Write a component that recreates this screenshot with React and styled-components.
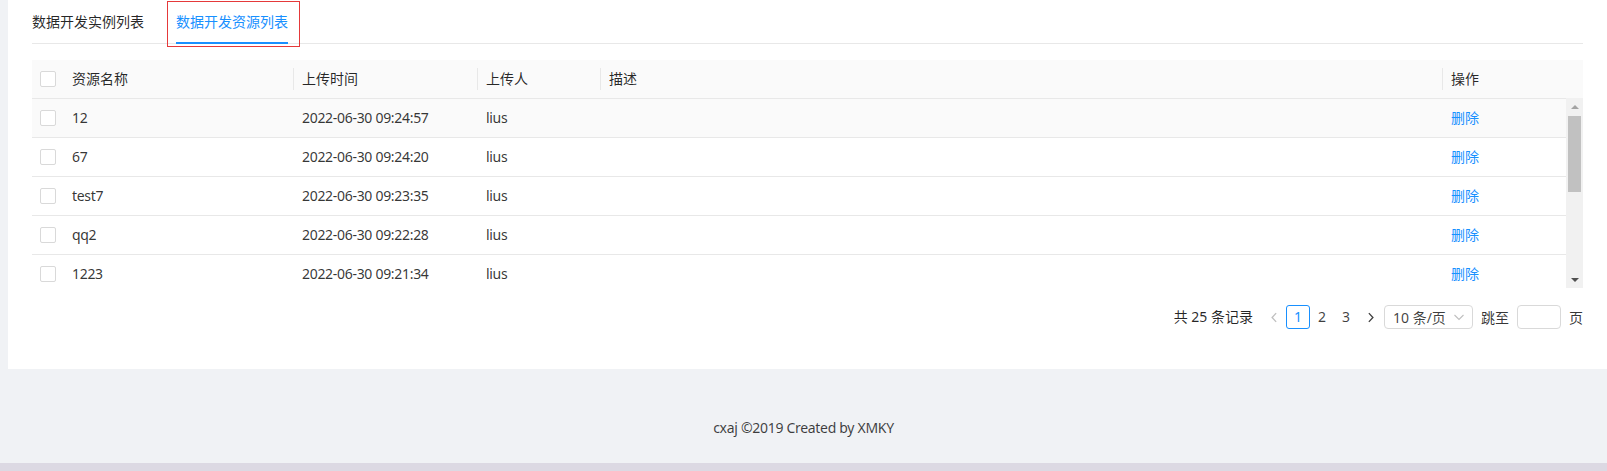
import React from "react";
import styled, { createGlobalStyle } from "styled-components";

const GlobalStyle = createGlobalStyle`
  html, body {
    margin: 0;
    padding: 0;
    background: #f0f2f5;
  }
  body {
    font-family: "Noto Sans", "Noto Sans CJK SC", sans-serif;
    font-size: 14px;
    color: rgba(0, 0, 0, 0.85);
  }
  * {
    box-sizing: border-box;
  }
`;

const rows = [
  { name: "12", time: "2022-06-30 09:24:57", user: "lius", hover: true },
  { name: "67", time: "2022-06-30 09:24:20", user: "lius" },
  { name: "test7", time: "2022-06-30 09:23:35", user: "lius" },
  { name: "qq2", time: "2022-06-30 09:22:28", user: "lius" },
  { name: "1223", time: "2022-06-30 09:21:34", user: "lius" },
];

function App() {
  return (
    <Page>
      <GlobalStyle />
      <Content>
        <Card>
          <TabBar>
            <Tab>数据开发实例列表</Tab>
            <Tab active marked>
              数据开发资源列表
            </Tab>
          </TabBar>

          <Table>
            <HeadRow>
              <SelCell>
                <Checkbox />
              </SelCell>
              <HeadCell first>资源名称</HeadCell>
              <HeadCell>上传时间</HeadCell>
              <HeadCell>上传人</HeadCell>
              <HeadCell>描述</HeadCell>
              <HeadCell>操作</HeadCell>
            </HeadRow>
            <BodyWrap>
              <Rows>
                {rows.map((r) => (
                  <Row key={r.name} hover={r.hover}>
                    <SelCell>
                      <Checkbox />
                    </SelCell>
                    <Cell first>{r.name}</Cell>
                    <Cell>{r.time}</Cell>
                    <Cell>{r.user}</Cell>
                    <Cell></Cell>
                    <Cell>
                      <Action>删除</Action>
                    </Cell>
                  </Row>
                ))}
              </Rows>
              <Scrollbar>
                <ArrowBox>
                  <Triangle up color="#a3a3a3" />
                </ArrowBox>
                <Thumb />
                <Track />
                <ArrowBox>
                  <Triangle color="#505050" />
                </ArrowBox>
              </Scrollbar>
            </BodyWrap>
          </Table>

          <Pagination>
            <Total>共 25 条记录</Total>
            <PageItem disabled>
              <Chevron dir="left" />
            </PageItem>
            <PageItem active>1</PageItem>
            <PageItem>2</PageItem>
            <PageItem>3</PageItem>
            <PageItem>
              <Chevron dir="right" />
            </PageItem>
            <SizeSelect>
              10 条/页
              <DownArrow viewBox="0 0 12 12">
                <path d="M1.5 4l4.5 4.5L10.5 4" fill="none" stroke="#bfbfbf" strokeWidth="1.1" />
              </DownArrow>
            </SizeSelect>
            <Jump>
              跳至
              <JumpInput />
              页
            </Jump>
          </Pagination>
        </Card>
      </Content>
      <Footer>cxaj ©2019 Created by XMKY</Footer>
      <BottomStrip />
    </Page>
  );
}

function Chevron({ dir }) {
  return (
    <ChevronSvg viewBox="0 0 10 10">
      {dir === "left" ? (
        <path d="M6.5 1L2.8 5l3.7 4" fill="none" stroke="currentColor" strokeWidth="1.2" />
      ) : (
        <path d="M3.5 1L7.2 5 3.5 9" fill="none" stroke="currentColor" strokeWidth="1.2" />
      )}
    </ChevronSvg>
  );
}

export default App;

const Page = styled.div`
  width: 1607px;
  min-height: 471px;
  display: flex;
  flex-direction: column;
`;

const Content = styled.div`
  padding-left: 8px;
`;

const Card = styled.div`
  background: #fff;
  height: 369px;
  padding: 0 24px;
`;

const TabBar = styled.div`
  display: flex;
  height: 44px;
  border-bottom: 1px solid #e8e8e8;
`;

const Tab = styled.div`
  position: relative;
  height: 43px;
  padding-top: 11px;
  line-height: 22px;
  margin-right: 32px;
  color: ${(p) => (p.active ? "#1890ff" : "rgba(0, 0, 0, 0.85)")};
  &::after {
    content: "";
    display: ${(p) => (p.active ? "block" : "none")};
    position: absolute;
    left: 0;
    right: 0;
    bottom: -1px;
    height: 2px;
    background: #1890ff;
  }
  &::before {
    content: "";
    display: ${(p) => (p.marked ? "block" : "none")};
    position: absolute;
    left: -9px;
    right: -12px;
    top: 1px;
    bottom: -4px;
    border: 1px solid #e5393a;
  }
`;

const Table = styled.div`
  margin-top: 16px;
`;

const HeadRow = styled.div`
  display: grid;
  grid-template-columns: 31px 230px 184px 123px 1fr 141px;
  height: 38px;
  align-items: center;
  background: #fafafa;
`;

const SelCell = styled.div`
  padding-left: 8px;
  display: flex;
  align-items: center;
`;

const HeadCell = styled.div`
  position: relative;
  padding-left: 9px;
  line-height: 22px;
  color: rgba(0, 0, 0, 0.85);
  &::before {
    content: "";
    display: ${(p) => (p.first ? "none" : "block")};
    position: absolute;
    left: 0;
    top: 0;
    width: 1px;
    height: 22px;
    background: #e8e8e8;
  }
`;

const Checkbox = styled.span`
  display: block;
  width: 16px;
  height: 16px;
  border: 1px solid #d9d9d9;
  border-radius: 2px;
  background: #fff;
`;

const BodyWrap = styled.div`
  display: flex;
  height: 190px;
`;

const Rows = styled.div`
  flex: 1;
  overflow: hidden;
`;

const Row = styled.div`
  display: grid;
  grid-template-columns: 31px 230px 184px 123px 1fr 124px;
  height: 39px;
  align-items: center;
  border-top: 1px solid #e8e8e8;
  background: ${(p) => (p.hover ? "#fafafa" : "#fff")};
`;

const Cell = styled.div`
  padding-left: 9px;
  line-height: 22px;
  letter-spacing: -0.3px;
  color: rgba(0, 0, 0, 0.8);
  white-space: nowrap;
`;

const Action = styled.span`
  color: #1890ff;
  letter-spacing: 0;
  cursor: pointer;
`;

const Scrollbar = styled.div`
  width: 17px;
  display: flex;
  flex-direction: column;
  background: #f1f1f1;
`;

const ArrowBox = styled.div`
  height: 17px;
  display: flex;
  align-items: center;
  justify-content: center;
`;

const Triangle = styled.span`
  width: 0;
  height: 0;
  border-left: 4px solid transparent;
  border-right: 4px solid transparent;
  ${(p) =>
    p.up
      ? `border-bottom: 4px solid ${p.color};`
      : `border-top: 4px solid ${p.color};`}
`;

const Thumb = styled.div`
  height: 76px;
  margin: 1px 2px 0;
  background: #c1c1c1;
`;

const Track = styled.div`
  flex: 1;
`;

const Pagination = styled.div`
  display: flex;
  justify-content: flex-end;
  align-items: center;
  margin-top: 17px;
  height: 24px;
`;

const Total = styled.span`
  margin-right: 9px;
  line-height: 24px;
`;

const PageItem = styled.div`
  min-width: 24px;
  height: 24px;
  line-height: 22px;
  text-align: center;
  border: 1px solid ${(p) => (p.active ? "#1890ff" : "transparent")};
  border-radius: 3px;
  color: ${(p) =>
    p.active ? "#1890ff" : p.disabled ? "rgba(0, 0, 0, 0.25)" : "rgba(0, 0, 0, 0.75)"};
  display: flex;
  align-items: center;
  justify-content: center;
`;

const ChevronSvg = styled.svg`
  width: 11px;
  height: 11px;
`;

const SizeSelect = styled.div`
  display: flex;
  align-items: center;
  justify-content: space-between;
  margin-left: 2px;
  width: 89px;
  height: 24px;
  padding: 0 7px 0 8px;
  border: 1px solid #d9d9d9;
  border-radius: 4px;
  color: rgba(0, 0, 0, 0.75);
`;

const DownArrow = styled.svg`
  width: 12px;
  height: 12px;
`;

const Jump = styled.div`
  display: flex;
  align-items: center;
  margin-left: 8px;
  color: rgba(0, 0, 0, 0.8);
`;

const JumpInput = styled.div`
  width: 44px;
  height: 24px;
  margin: 0 8px;
  border: 1px solid #d9d9d9;
  border-radius: 4px;
`;

const Footer = styled.div`
  height: 94px;
  padding-top: 48px;
  line-height: 22px;
  letter-spacing: -0.3px;
  text-align: center;
  color: rgba(0, 0, 0, 0.75);
`;

const BottomStrip = styled.div`
  height: 8px;
  background: #dcd9e3;
`;
